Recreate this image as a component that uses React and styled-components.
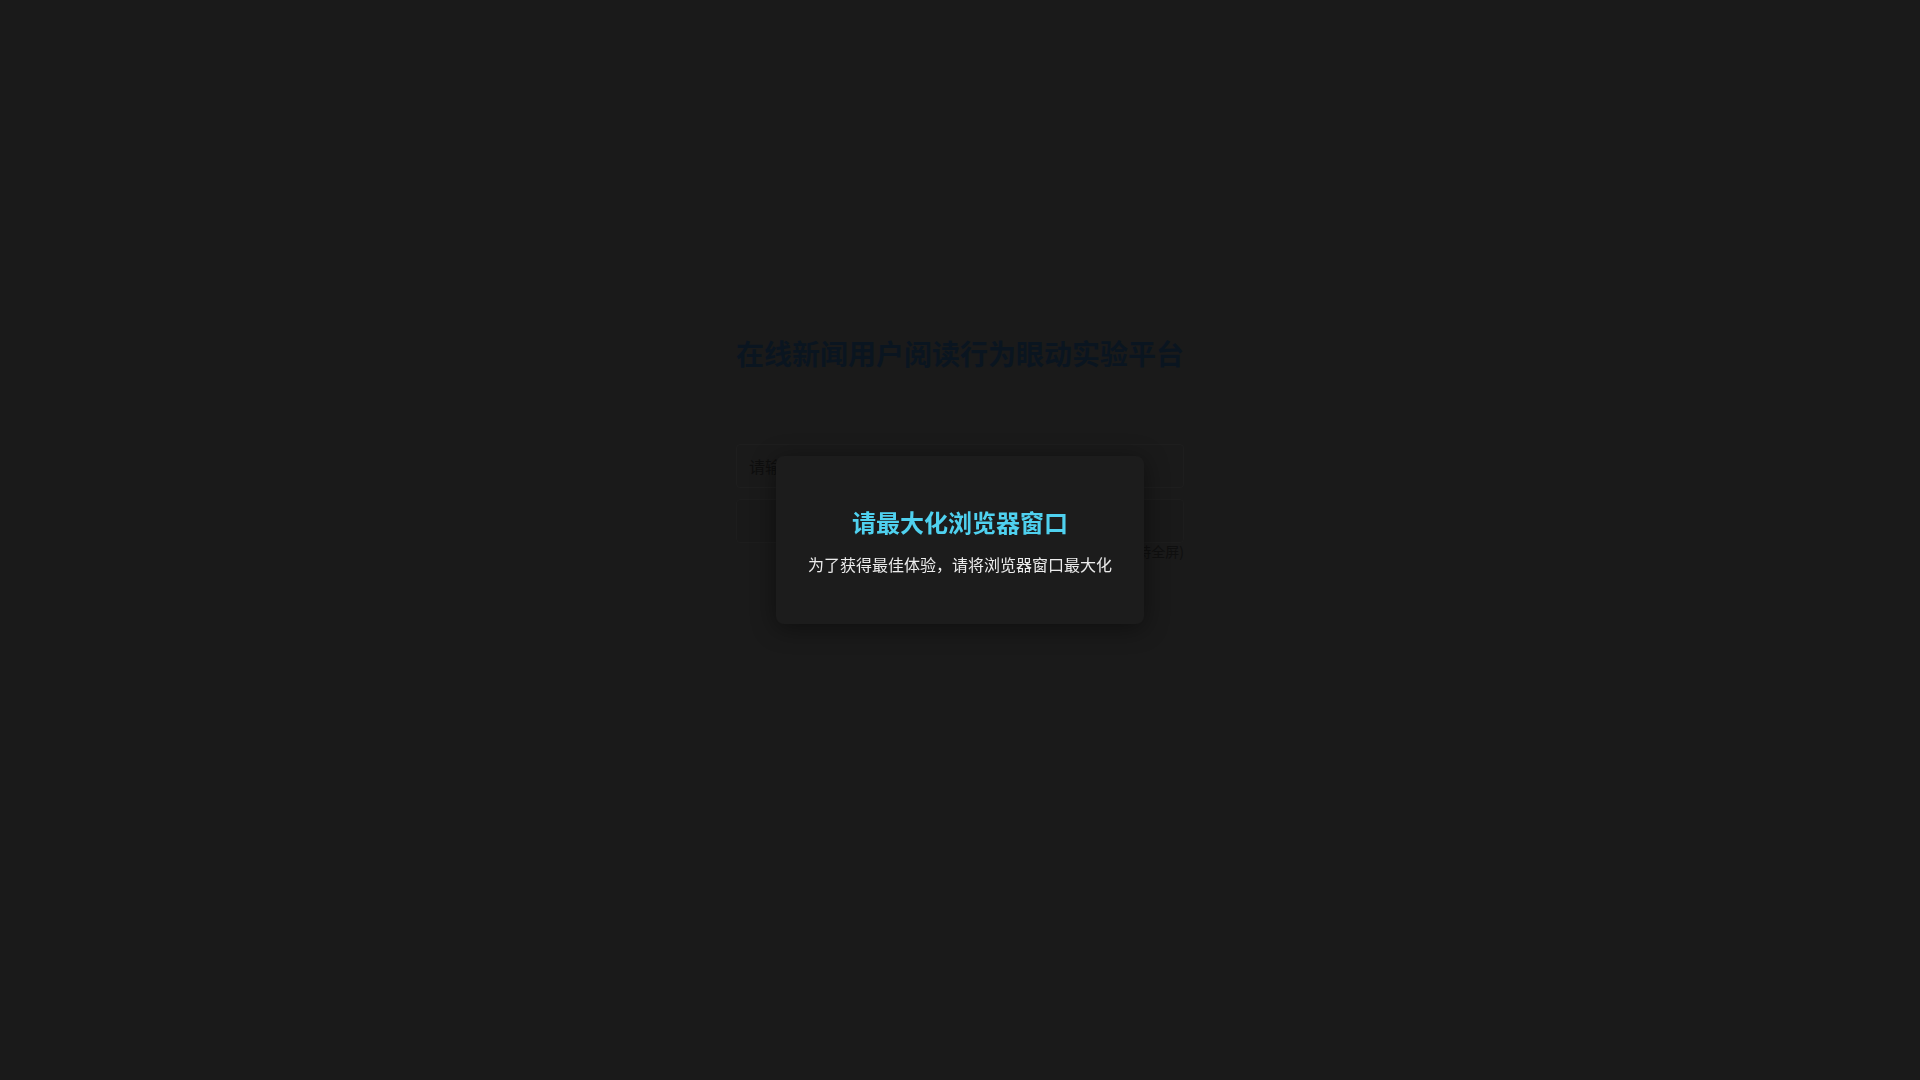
import styled, { createGlobalStyle } from 'styled-components';

const GlobalStyle = createGlobalStyle`
  html, body {
    margin: 0;
    padding: 0;
    background-color: #1a1a1a;
    font-family: "Noto Sans CJK SC", "Noto Sans", "Liberation Sans", sans-serif;
  }
  * {
    box-sizing: border-box;
  }
`;

const Page = styled.div`
  display: flex;
  flex-direction: column;
  align-items: center;
  min-height: 100vh;
  padding-top: 333px;
  background-color: #1a1a1a;
`;

const Title = styled.h1`
  margin: 0;
  font-size: 28px;
  line-height: 40px;
  font-weight: 700;
  color: #0a1520;
`;

const Form = styled.div`
  display: flex;
  flex-direction: column;
  width: 448px;
  margin-top: 71px;
`;

const Input = styled.input`
  height: 44px;
  padding: 0 12px;
  border: 1px solid #1e1e1e;
  border-radius: 4px;
  background-color: transparent;
  font-family: inherit;
  font-size: 16px;
  color: #101010;
  outline: none;
  &::placeholder {
    color: #0e0e0e;
  }
`;

const LoginButton = styled.button`
  height: 44px;
  margin-top: 11px;
  border: 1px solid #1d1d1d;
  border-radius: 4px;
  background-color: #191919;
  font-family: inherit;
  font-size: 16px;
  color: #161616;
  cursor: pointer;
`;

const Note = styled.p`
  margin: -2px 0 0 0;
  font-size: 14px;
  line-height: 20px;
  color: #0f0f0f;
  text-align: right;
`;

const Overlay = styled.div`
  position: fixed;
  inset: 0;
  display: flex;
  justify-content: center;
  align-items: center;
`;

const Modal = styled.div`
  display: flex;
  flex-direction: column;
  align-items: center;
  width: 368px;
  padding: 48px 24px;
  border-radius: 8px;
  background-color: #1c1c1c;
  box-shadow: 0 4px 24px rgba(0, 0, 0, 0.45);
`;

const ModalTitle = styled.h2`
  margin: 0;
  font-size: 24px;
  line-height: 36px;
  font-weight: 700;
  color: #4fd1ef;
`;

const ModalText = styled.p`
  margin: 12px 0 0 0;
  font-size: 16px;
  line-height: 24px;
  color: #ececec;
  white-space: nowrap;
`;

const App = () => {
  return (
    <>
      <GlobalStyle />
      <Page>
        <Title>在线新闻用户阅读行为眼动实验平台</Title>
        <Form>
          <Input placeholder="请输入您的姓名或编号" />
          <LoginButton>开始实验</LoginButton>
          <Note>(实验过程中请勿刷新页面，请保持全屏)</Note>
        </Form>
      </Page>
      <Overlay>
        <Modal>
          <ModalTitle>请最大化浏览器窗口</ModalTitle>
          <ModalText>为了获得最佳体验，请将浏览器窗口最大化</ModalText>
        </Modal>
      </Overlay>
    </>
  );
};

export default App;
